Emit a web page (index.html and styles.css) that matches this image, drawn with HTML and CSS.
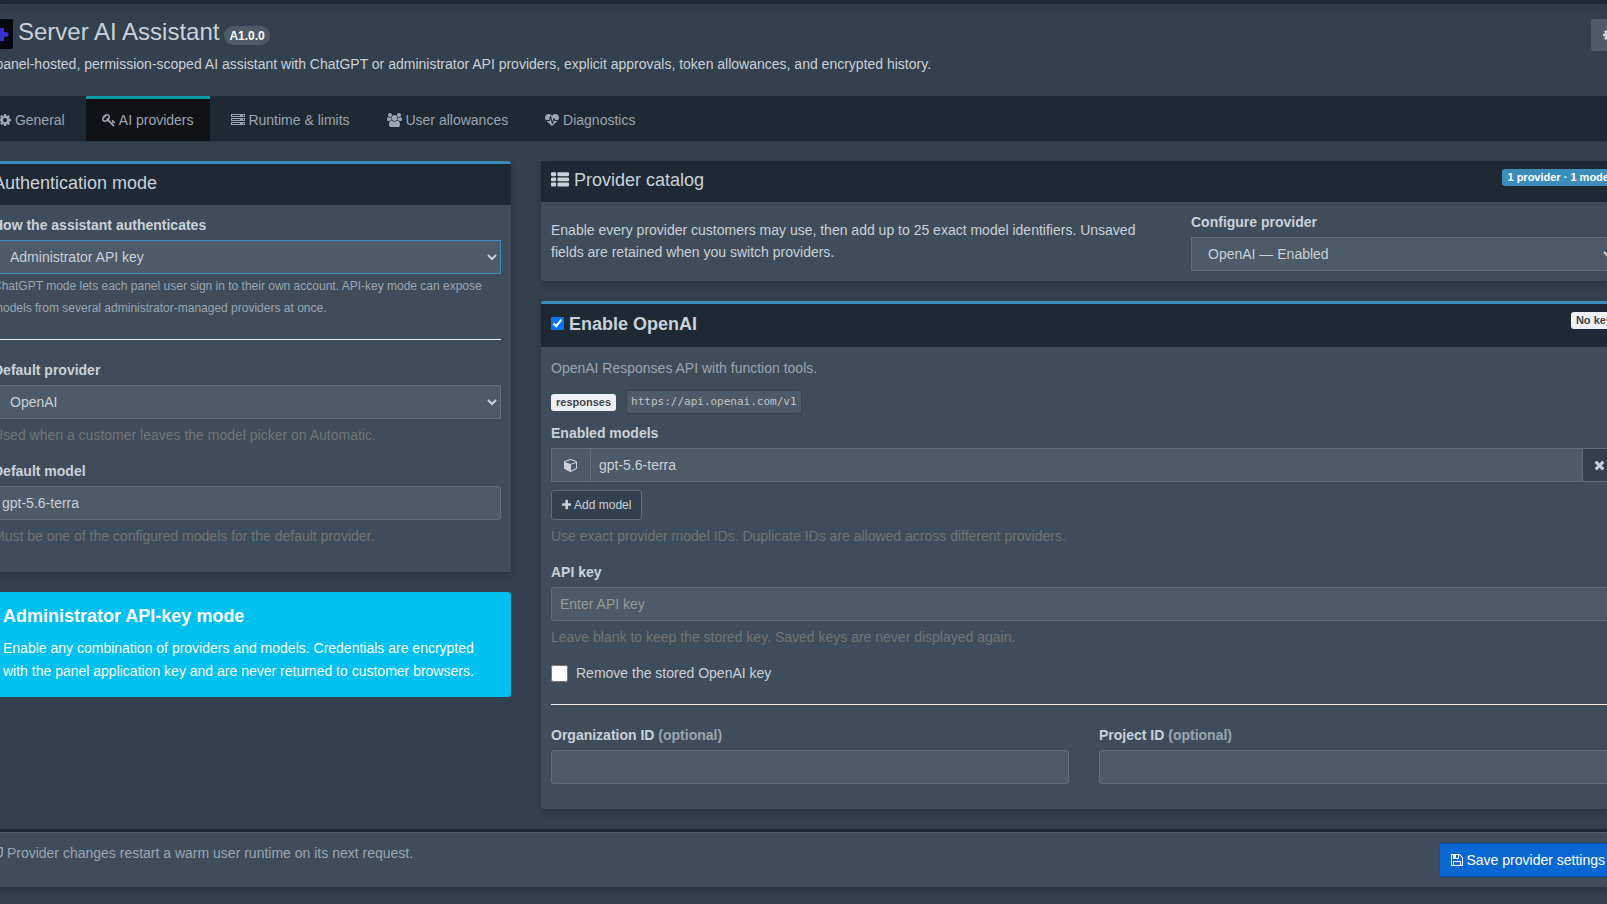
FILE: index.html
```html
<!DOCTYPE html>
<html lang="en">

<head>
    <meta charset="UTF-8">
    <meta name="viewport" content="width=device-width, initial-scale=1.0">
    <title>Server AI Assistant</title>
    <link rel="stylesheet" href="styles.css">
</head>

<body>
    <div class="topbar"></div>

    <div class="content-wrapper">
        <header class="page-header">
            <div class="page-heading">
                <h1>
                    <svg class="logo" viewBox="0 0 30 30"><rect width="30" height="30" rx="2" fill="#06060f"/><path fill="#3a2fd0" d="M6 9h5a2 2 0 0 1 4 0h6v4h2a2 2 0 0 1 0 5h-2v4h-4a2 2 0 0 0-4 0H6z"/></svg>
                    <span class="name">Server AI Assistant</span>
                    <span class="version">A1.0.0</span>
                </h1>
                <p>A panel-hosted, permission-scoped AI assistant with ChatGPT or administrator API providers, explicit approvals, token allowances, and encrypted history.</p>
            </div>
            <button type="button" class="btn btn-gray" aria-label="Extension settings">
                <svg class="icon" viewBox="128 0 1536 1792"><use href="#i-cog"/></svg>
            </button>
        </header>

        <nav class="tabs">
            <a href="#general"><svg class="icon" viewBox="128 0 1536 1792"><path id="i-cog" d="M1152 896q0-106-75-181t-181-75-181 75-75 181 75 181 181 75 181-75 75-181zm512-109v222q0 12-8 23t-20 13l-185 28q-19 54-39 91 35 50 107 138 10 12 10 25t-9 23q-27 37-99 108t-94 71q-12 0-26-9l-138-108q-44 23-91 38-16 136-29 186-7 28-36 28h-222q-14 0-24.5-8.5t-11.5-21.5l-28-184q-49-16-90-37l-141 107q-10 9-25 9-14 0-25-11-126-114-165-168-7-10-7-23 0-12 8-23 15-21 51-66.5t54-70.5q-27-50-41-99l-183-27q-13-2-21-12.5t-8-23.5v-222q0-12 8-23t19-13l186-28q14-46 39-92-40-57-107-138-10-12-10-24 0-10 9-23 26-36 98.5-107.5t94.5-71.5q13 0 26 10l138 107q44-23 91-38 16-136 29-186 7-28 36-28h222q14 0 24.5 8.5t11.5 21.5l28 184q49 16 90 37l142-107q9-9 24-9 13 0 25 10 129 119 165 170 7 8 7 22 0 12-8 23-15 21-51 66.5t-54 70.5q26 50 41 98l183 28q13 2 21 12.5t8 23.5z"/></svg> General</a>
            <a href="#providers" class="active"><svg class="icon" viewBox="0 0 1792 1792"><path d="M832 512q0-80-56-136t-136-56-136 56-56 136q0 42 19 83-41-19-83-19-80 0-136 56t-56 136 56 136 136 56 136-56 56-136q0-42-19-83 41 19 83 19 80 0 136-56t56-136zm851 704q0 17-49 66t-66 49q-9 0-28.5-16t-36.5-33-38.5-40-24.5-26l-96 96 220 220q28 28 28 68 0 42-39 81t-81 39q-40 0-68-28l-671-671q-176 131-365 131-163 0-265.5-102.5t-102.5-265.5q0-160 95-313t248-248 313-95q163 0 265.5 102.5t102.5 265.5q0 189-131 365l355 355 96-96q-3-3-26-24.5t-40-38.5-33-36.5-16-28.5q0-17 49-66t66-49q13 0 23 10 6 6 46 44.5t82 79.5 86.5 86 73 78 28.5 41z"/></svg> AI providers</a>
            <a href="#runtime"><svg class="icon" viewBox="0 0 1792 1792"><path d="M128 1408h1024v-128h-1024v128zm0-512h1024v-128h-1024v128zm1568 448q0-40-28-68t-68-28-68 28-28 68 28 68 68 28 68-28 28-68zm-1568-960h1024v-128h-1024v128zm1568 448q0-40-28-68t-68-28-68 28-28 68 28 68 68 28 68-28 28-68zm0-512q0-40-28-68t-68-28-68 28-28 68 28 68 68 28 68-28 28-68zm96 832v384h-1792v-384h1792zm0-512v384h-1792v-384h1792zm0-512v384h-1792v-384h1792z"/></svg> Runtime &amp; limits</a>
            <a href="#allowances"><svg class="icon" viewBox="0 0 1920 1792"><path d="M593 896q-162 5-265 128h-134q-82 0-138-40.5t-56-118.5q0-353 124-353 6 0 43.5 21t97.5 42.5 119 21.5q67 0 133-23-5 37-5 66 0 139 81 256zm1071 637q0 120-73 189.5t-194 69.5h-874q-121 0-194-69.5t-73-189.5q0-53 3.5-103.5t14-109 26.5-108.5 43-97.5 62-81 85.5-53.5 111.5-20q10 0 43 21.5t73 48 107 48 135 21.5 135-21.5 107-48 73-48 43-21.5q61 0 111.5 20t85.5 53.5 62 81 43 97.5 26.5 108.5 14 109 3.5 103.5zm-1024-1277q0 106-75 181t-181 75-181-75-75-181 75-181 181-75 181 75 75 181zm704 384q0 159-112.5 271.5t-271.5 112.5-271.5-112.5-112.5-271.5 112.5-271.5 271.5-112.5 271.5 112.5 112.5 271.5zm576 225q0 78-56 118.5t-138 40.5h-134q-103-123-265-128 81-117 81-256 0-29-5-66 66 23 133 23 59 0 119-21.5t97.5-42.5 43.5-21q124 0 124 353zm-128-609q0 106-75 181t-181 75-181-75-75-181 75-181 181-75 181 75 75 181z"/></svg> User allowances</a>
            <a href="#diagnostics"><svg class="icon" viewBox="0 0 1792 1792"><path d="M1280 1024h305q-5 6-10 10.5t-9 7.5l-3 4-623 600q-18 18-44 18t-44-18l-624-602q-5-2-21-20h369q22 0 39.5-13.5t22.5-34.5l70-281 190 667q6 20 23 33t39 13q21 0 38-13t23-33l146-485 56 112q18 35 57 35zm512-428q0 145-103 300h-369l-111-221q-8-17-25.5-27t-36.5-8q-45 5-56 46l-129 430-196-686q-6-20-23.5-33t-39.5-13-39 13.5-22 34.5l-116 464h-423q-103-155-103-300 0-220 127-344t351-124q62 0 126.5 21.5t120 58 95.5 68.5 76 68q36-36 76-68t95.5-68.5 120-58 126.5-21.5q224 0 351 124t127 344z"/></svg> Diagnostics</a>
        </nav>

        <form>
            <div class="columns">
                <!-- Authentication -->
                <div class="col-side">
                    <section class="box box-primary">
                        <div class="box-header">
                            <h3>Authentication mode</h3>
                        </div>
                        <div class="box-body">
                            <label for="auth-mode">How the assistant authenticates</label>
                            <select id="auth-mode" class="form-control focused">
                                <option>Administrator API key</option>
                                <option>ChatGPT</option>
                            </select>
                            <p class="note">ChatGPT mode lets each panel user sign in to their own account. API-key mode can expose models from several administrator-managed providers at once.</p>
                            <hr>
                            <div class="form-group">
                                <label for="default-provider">Default provider</label>
                                <select id="default-provider" class="form-control">
                                    <option>OpenAI</option>
                                </select>
                                <p class="help-block">Used when a customer leaves the model picker on Automatic.</p>
                            </div>
                            <div class="form-group">
                                <label for="default-model">Default model</label>
                                <input type="text" id="default-model" class="form-control" value="gpt-5.6-terra">
                                <p class="help-block">Must be one of the configured models for the default provider.</p>
                            </div>
                        </div>
                    </section>

                    <div class="callout">
                        <h4>Administrator API-key mode</h4>
                        <p>Enable any combination of providers and models. Credentials are encrypted with the panel application key and are never returned to customer browsers.</p>
                    </div>
                </div>

                <!-- Providers -->
                <div class="col-main">
                    <section class="box">
                        <div class="box-header">
                            <h3><svg class="icon" viewBox="0 0 1792 1792"><path d="M512 1248v192q0 40-28 68t-68 28h-320q-40 0-68-28t-28-68v-192q0-40 28-68t68-28h320q40 0 68 28t28 68zm0-512v192q0 40-28 68t-68 28h-320q-40 0-68-28t-28-68v-192q0-40 28-68t68-28h320q40 0 68 28t28 68zm1280 512v192q0 40-28 68t-68 28h-960q-40 0-68-28t-28-68v-192q0-40 28-68t68-28h960q40 0 68 28t28 68zm-1280-1024v192q0 40-28 68t-68 28h-320q-40 0-68-28t-28-68v-192q0-40 28-68t68-28h320q40 0 68 28t28 68zm1280 512v192q0 40-28 68t-68 28h-960q-40 0-68-28t-28-68v-192q0-40 28-68t68-28h960q40 0 68 28t28 68zm0-512v192q0 40-28 68t-68 28h-960q-40 0-68-28t-28-68v-192q0-40 28-68t68-28h960q40 0 68 28t28 68z"/></svg> Provider catalog</h3>
                            <span class="tag tag-primary">1 provider · 1 model</span>
                        </div>
                        <div class="box-body catalog">
                            <p>Enable every provider customers may use, then add up to 25 exact model identifiers. Unsaved fields are retained when you switch providers.</p>
                            <div>
                                <label for="configure-provider">Configure provider</label>
                                <select id="configure-provider" class="form-control">
                                    <option>OpenAI — Enabled</option>
                                </select>
                            </div>
                        </div>
                    </section>

                    <section class="box box-primary">
                        <div class="box-header">
                            <label class="enable" for="enable-openai"><input type="checkbox" id="enable-openai" checked> Enable OpenAI</label>
                            <span class="tag">No key</span>
                        </div>
                        <div class="box-body">
                            <p class="muted">OpenAI Responses API with function tools.</p>
                            <div class="endpoint">
                                <span class="tag">responses</span>
                                <code>https://api.openai.com/v1</code>
                            </div>
                            <div class="form-group">
                                <label for="model-1">Enabled models</label>
                                <div class="input-group">
                                    <span class="addon"><svg class="icon" viewBox="0 0 1792 1792"><path d="M896 1629l640-349v-636l-640 233v752zm-64-865l698-254-698-254-698 254zm832-252v768q0 35-18 65t-49 47l-704 384q-28 16-61 16t-61-16l-704-384q-31-17-49-47t-18-65v-768q0-40 23-73t61-47l704-256q22-8 44-8t44 8l704 256q38 14 61 47t23 73z"/></svg></span>
                                    <input type="text" id="model-1" class="form-control" value="gpt-5.6-terra">
                                    <button type="button" class="btn btn-default" aria-label="Remove model"><svg class="icon" viewBox="192 0 1408 1792"><path d="M1490 1322q0 40-28 68l-136 136q-28 28-68 28t-68-28l-294-294-294 294q-28 28-68 28t-68-28l-136-136q-28-28-28-68t28-68l294-294-294-294q-28-28-28-68t28-68l136-136q28-28 68-28t68 28l294 294 294-294q28-28 68-28t68 28l136 136q28 28 28 68t-28 68l-294 294 294 294q28 28 28 68z"/></svg></button>
                                </div>
                                <button type="button" class="btn btn-default btn-sm"><svg class="icon" viewBox="192 0 1408 1792"><path d="M1600 736v192q0 40-28 68t-68 28h-416v416q0 40-28 68t-68 28h-192q-40 0-68-28t-28-68v-416h-416q-40 0-68-28t-28-68v-192q0-40 28-68t68-28h416v-416q0-40 28-68t68-28h192q40 0 68 28t28 68v416h416q40 0 68 28t28 68z"/></svg> Add model</button>
                                <p class="help-block">Use exact provider model IDs. Duplicate IDs are allowed across different providers.</p>
                            </div>
                            <div class="form-group">
                                <label for="api-key">API key</label>
                                <input type="password" id="api-key" class="form-control" placeholder="Enter API key">
                                <p class="help-block">Leave blank to keep the stored key. Saved keys are never displayed again.</p>
                            </div>
                            <label class="remove-key" for="remove-key"><input type="checkbox" id="remove-key"> Remove the stored OpenAI key</label>
                            <hr>
                            <div class="id-fields">
                                <div class="form-group">
                                    <label for="org-id">Organization ID <span class="muted">(optional)</span></label>
                                    <input type="text" id="org-id" class="form-control">
                                </div>
                                <div class="form-group">
                                    <label for="project-id">Project ID <span class="muted">(optional)</span></label>
                                    <input type="text" id="project-id" class="form-control">
                                </div>
                            </div>
                        </div>
                    </section>
                </div>
            </div>

            <div class="box save-bar">
                <p class="muted"><svg class="icon" viewBox="256 0 1280 1792"><path d="M1344 960v-640h-448v1137q119-63 213-137 235-184 235-360zm192-768v768q0 86-33.5 170.5t-83 150-118 127.5-126.5 103-121 77.5-89.5 49.5-42.5 20q-12 6-26 6t-26-6q-16-7-42.5-20t-89.5-49.5-121-77.5-126.5-103-118-127.5-83-150-33.5-170.5v-768q0-26 19-45t45-19h1152q26 0 45 19t19 45z"/></svg> Provider changes restart a warm user runtime on its next request.</p>
                <button type="submit" class="btn btn-primary"><svg class="icon" viewBox="128 0 1536 1792"><path d="M512 1536h768v-384h-768v384zm896 0h128v-896q0-14-10-38.5t-20-34.5l-281-281q-10-10-34-20t-39-10v416q0 40-28 68t-68 28h-576q-40 0-68-28t-28-68v-416h-128v1280h128v-416q0-40 28-68t68-28h832q40 0 68 28t28 68v416zm-384-928v-320q0-13-9.5-22.5t-22.5-9.5h-192q-13 0-22.5 9.5t-9.5 22.5v320q0 13 9.5 22.5t22.5 9.5h192q13 0 22.5-9.5t9.5-22.5zm640 32v928q0 40-28 68t-68 28h-1344q-40 0-68-28t-28-68v-1344q0-40 28-68t68-28h928q40 0 88 20t76 48l280 280q28 28 48 76t20 88z"/></svg> Save provider settings</button>
            </div>
        </form>
    </div>
</body>

</html>
```
FILE: styles.css
```css
* {
    box-sizing: border-box;
}

body {
    margin: 0;
    background: #33404d;
    color: #cad1d8;
    font-family: "Liberation Sans", Arial, sans-serif;
    font-size: 14px;
    line-height: 20px;
    overflow-x: hidden;
}

h1, h3, h4, p {
    margin: 0;
    font-weight: 400;
}

p {
    line-height: 22px;
}

hr {
    margin: 20px 0;
    border: 0;
    border-top: 1px solid #eee;
}

label {
    display: block;
    margin-bottom: 5px;
    font-weight: 700;
}

.icon {
    height: 1em;
    vertical-align: -2px;
    fill: currentColor;
}

.muted {
    color: #9aa5b1;
}

.topbar {
    height: 4px;
    background: #1f2933;
    box-shadow: 0 4px 8px rgba(0, 0, 0, 0.12), 0 2px 4px rgba(0, 0, 0, 0.08);
}

/* the content runs past both window edges */
.content-wrapper {
    margin: 0 -20px 0 -17px;
    padding-top: 15px;
}

/* Page header */
.page-header {
    display: flex;
    justify-content: space-between;
    align-items: flex-start;
    height: 77px;
}

.page-header h1 {
    display: flex;
    align-items: center;
    gap: 5px;
    height: 30px;
    margin-bottom: 4px;
    font-size: 24px;
    line-height: 26px;
}

.logo {
    width: 30px;
    height: 30px;
}

.name {
    padding-bottom: 4px;
}

.version {
    margin-top: 2px;
    padding: 4px 5px 3px;
    border-radius: 10px;
    background: #4d5b69;
    color: #fff;
    font-size: 12px;
    font-weight: 700;
    line-height: 12px;
}

/* Tabs */
.tabs {
    display: flex;
    gap: 5px;
    margin-bottom: 20px;
    background: #1f2933;
    box-shadow: 0 1px 1px rgba(0, 0, 0, 0.1);
}

.tabs a {
    padding: 11px 16px;
    border-top: 3px solid transparent;
    color: #9aa5b1;
    text-decoration: none;
}

.tabs .active {
    border-top-color: #099aa5;
    background: #111216;
}

/* Grid */
.columns {
    display: grid;
    grid-template-columns: minmax(0, 528fr) minmax(0, 1086fr);
    gap: 30px;
}

/* Boxes */
.box {
    margin-bottom: 20px;
    border-radius: 3px;
    background: #3f4d5a;
    box-shadow: 0 4px 8px rgba(0, 0, 0, 0.12), 0 2px 4px rgba(0, 0, 0, 0.08);
}

.box-primary {
    border-top: 3px solid #3c8dbc;
}

.box-header {
    display: flex;
    justify-content: space-between;
    align-items: flex-start;
    padding: 8px 10px 13px;
    background: #1f2933;
}

.box-header h3 {
    height: 20px;
    padding-top: 2px;
    font-size: 18px;
    line-height: 18px;
}

.box-header h3 .icon {
    vertical-align: -3px;
}

.box-body {
    padding: 10px;
}

.enable {
    margin: 0;
    padding-top: 2px;
    font-size: 18px;
}

.enable input {
    width: 13px;
    height: 13px;
    margin: 0;
    vertical-align: 0;
}

.tag {
    padding: 3px 5px;
    border-radius: 3px;
    background: #eef1f8;
    color: #444;
    font-size: 11px;
    font-weight: 700;
    line-height: 11px;
}

.tag-primary {
    background: #3c8dbc;
    color: #fff;
}

/* Forms */
.form-group {
    margin-bottom: 15px;
}

.form-control {
    display: block;
    width: 100%;
    height: 34px;
    padding: 6px 8px;
    border: 1px solid #606d7b;
    border-radius: 3px;
    background: #4d5a67;
    color: #cad1d8;
    font: inherit;
}

.form-control::placeholder {
    color: #999;
    opacity: 1;
}

select.form-control {
    padding: 6px 0 6px 12px;
    border-radius: 0;
}

.form-control.focused {
    border-color: #3c8dbc;
}

.note {
    margin-top: 1px;
    color: #9aa5b1;
    font-size: 12px;
}

.help-block {
    margin-top: 5px;
    color: #737373;
}

.catalog {
    display: grid;
    grid-template-columns: minmax(0, 610fr) minmax(0, 426fr);
    gap: 30px;
}

.catalog p {
    margin-top: 7px;
}

.endpoint {
    display: flex;
    align-items: center;
    gap: 10px;
    margin: 11px 0 9px;
}

code {
    padding: 1px 4px;
    border: 1px solid rgba(0, 0, 0, 0.25);
    border-radius: 3px;
    background: #4d5a67;
    color: #c3c3c3;
    font-family: "DejaVu Sans Mono", monospace;
    font-size: 11px;
}

.input-group {
    display: flex;
}

.input-group .form-control {
    border-radius: 0;
}

.addon {
    flex: none;
    width: 40px;
    margin-right: -1px;
    padding: 6px 0;
    border: 1px solid #606d7b;
    background: #4d5a67;
    text-align: center;
}

.input-group .btn {
    margin-left: -1px;
}

.remove-key {
    display: flex;
    align-items: center;
    gap: 8px;
    margin: 0;
    font-weight: 400;
    line-height: 21px;
}

.remove-key input {
    width: 17px;
    height: 17px;
    margin: 0;
}

.id-fields {
    display: grid;
    grid-template-columns: 1fr 1fr;
    gap: 30px;
}

/* Buttons */
.btn {
    flex: none;
    height: 34px;
    padding: 0 11px;
    border: 1px solid #606d7b;
    border-radius: 3px;
    font: inherit;
    cursor: pointer;
}

.btn-default {
    background: #33404d;
    color: #cad1d8;
}

.btn-gray {
    height: 32px;
    border-color: #4d5b69;
    background: #4d5b69;
    color: #cad1d8;
}

.btn-sm {
    height: 30px;
    margin-top: 8px;
    padding: 0 10px;
    font-size: 12px;
}

.btn-primary {
    border-color: #0550b3;
    background: #0967d3;
    color: #fff;
}

/* Info callout */
.callout {
    padding: 14px 30px 14px 15px;
    border-left: 5px solid #0097bc;
    border-radius: 3px;
    background: #00c0ef;
    color: #fff;
}

.callout h4 {
    margin-bottom: 11px;
    font-size: 18px;
    font-weight: 700;
}

.callout p {
    line-height: 23px;
}

/* Save bar */
.save-bar {
    display: flex;
    justify-content: space-between;
    align-items: flex-start;
    padding: 11px 10px 10px;
    border-top: 3px solid #1f2933;
    box-shadow: inset 0 1px 0 #4d5b69, 0 4px 8px rgba(0, 0, 0, 0.12), 0 2px 4px rgba(0, 0, 0, 0.08);
}

.save-bar p {
    line-height: 20px;
}
```
